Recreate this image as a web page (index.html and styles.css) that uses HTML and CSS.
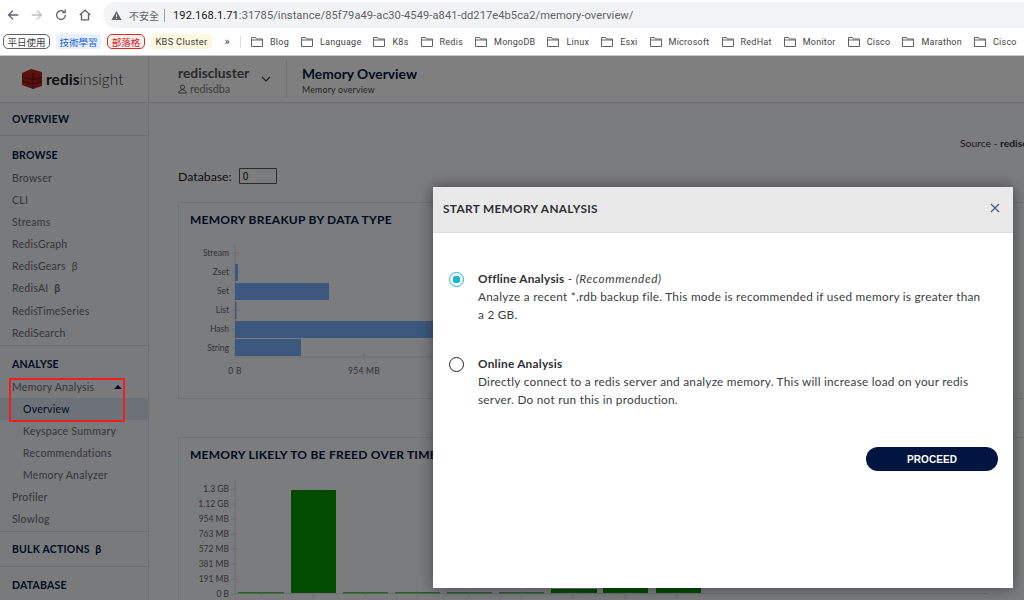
FILE: index.html
```html
<!DOCTYPE html>
<html lang="zh-TW">
<head>
<meta charset="utf-8">
<title>RedisInsight - Memory Overview</title>
<link rel="stylesheet" href="styles.css">
</head>
<body>
<div class="browser">
  <div class="toolbar">
    <div class="nav">
      <svg class="nav-icon" viewBox="0 0 16 16"><path d="M14 8H3M8 3L3 8l5 5" fill="none" stroke="#5f6368" stroke-width="1.6"/></svg>
      <svg class="nav-icon" viewBox="0 0 16 16"><path d="M2 8h11M8 3l5 5-5 5" fill="none" stroke="#bdc1c6" stroke-width="1.6"/></svg>
      <svg class="nav-icon" viewBox="0 0 16 16"><path d="M13 8a5 5 0 1 1-1.5-3.5M12.8 1.8v3.4H9.4" fill="none" stroke="#5f6368" stroke-width="1.5"/></svg>
      <svg class="nav-icon" viewBox="0 0 16 16"><path d="M2 8l6-5.5L14 8M4 7v6.5h8V7" fill="none" stroke="#5f6368" stroke-width="1.5"/></svg>
    </div>
    <div class="address">
      <svg class="warn" viewBox="0 0 12 12"><path d="M6 1l5.5 10H.5z" fill="#5f6368"/><path d="M5.500 4.500h1v3.500h-1zM5.500 8.800h1v1h-1z" fill="#f1f3f4"/></svg>
      <span class="insecure">不安全</span>
      <span class="pipe"></span>
      <span class="url"><b class="host">192.168.1.71</b>:31785/instance/85f79a49-ac30-4549-a841-dd217e4b5ca2/memory-overview/</span>
    </div>
  </div>
  <div class="bookmarks">
    <span class="chip chip-plain">平日使用</span>
    <span class="chip chip-blue">技術學習</span>
    <span class="chip chip-red">部落格</span>
    <span class="chip chip-yellow">KBS Cluster</span>
    <span class="more">»</span>
    <span class="sep"></span>
    <span class="bm"><svg class="folder" viewBox="0 0 12 10"><path d="M.5 9.500V.5h4l1 1.500h6v7.500zM.5 3h11" fill="none" stroke="#5f6368"/></svg>Blog</span>
    <span class="bm"><svg class="folder" viewBox="0 0 12 10"><path d="M.5 9.500V.5h4l1 1.500h6v7.500zM.5 3h11" fill="none" stroke="#5f6368"/></svg>Language</span>
    <span class="bm"><svg class="folder" viewBox="0 0 12 10"><path d="M.5 9.500V.5h4l1 1.500h6v7.500zM.5 3h11" fill="none" stroke="#5f6368"/></svg>K8s</span>
    <span class="bm"><svg class="folder" viewBox="0 0 12 10"><path d="M.5 9.500V.5h4l1 1.500h6v7.500zM.5 3h11" fill="none" stroke="#5f6368"/></svg>Redis</span>
    <span class="bm"><svg class="folder" viewBox="0 0 12 10"><path d="M.5 9.500V.5h4l1 1.500h6v7.500zM.5 3h11" fill="none" stroke="#5f6368"/></svg>MongoDB</span>
    <span class="bm"><svg class="folder" viewBox="0 0 12 10"><path d="M.5 9.500V.5h4l1 1.500h6v7.500zM.5 3h11" fill="none" stroke="#5f6368"/></svg>Linux</span>
    <span class="bm"><svg class="folder" viewBox="0 0 12 10"><path d="M.5 9.500V.5h4l1 1.500h6v7.500zM.5 3h11" fill="none" stroke="#5f6368"/></svg>Esxi</span>
    <span class="bm"><svg class="folder" viewBox="0 0 12 10"><path d="M.5 9.500V.5h4l1 1.500h6v7.500zM.5 3h11" fill="none" stroke="#5f6368"/></svg>Microsoft</span>
    <span class="bm"><svg class="folder" viewBox="0 0 12 10"><path d="M.5 9.500V.5h4l1 1.500h6v7.500zM.5 3h11" fill="none" stroke="#5f6368"/></svg>RedHat</span>
    <span class="bm"><svg class="folder" viewBox="0 0 12 10"><path d="M.5 9.500V.5h4l1 1.500h6v7.500zM.5 3h11" fill="none" stroke="#5f6368"/></svg>Monitor</span>
    <span class="bm"><svg class="folder" viewBox="0 0 12 10"><path d="M.5 9.500V.5h4l1 1.500h6v7.500zM.5 3h11" fill="none" stroke="#5f6368"/></svg>Cisco</span>
    <span class="bm"><svg class="folder" viewBox="0 0 12 10"><path d="M.5 9.500V.5h4l1 1.500h6v7.500zM.5 3h11" fill="none" stroke="#5f6368"/></svg>Marathon</span>
    <span class="bm"><svg class="folder" viewBox="0 0 12 10"><path d="M.5 9.500V.5h4l1 1.500h6v7.500zM.5 3h11" fill="none" stroke="#5f6368"/></svg>Cisco</span>
  </div>
</div>

<div class="app">
  <header class="app-header">
    <div class="logo">
      <svg class="logo-mark" viewBox="0 0 20 20">
        <path d="M0 4l9-4 11 3v14l-9 3-11-4z" fill="#b3201f"/>
        <path d="M0 8l11 3 9-3M0 12l11 3 9-3M11 4v16" fill="none" stroke="#6e1413" stroke-width="1.200"/>
      </svg>
      <span class="logo-text"><b>redis</b>insight</span>
    </div>
    <div class="db-switch">
      <div class="db-info">
        <div class="db-name">rediscluster</div>
        <div class="db-user">
          <svg class="user-icon" viewBox="0 0 10 10"><circle cx="5" cy="3" r="2.300" fill="none" stroke="#555"/><path d="M.8 9.500c.4-2.600 2-3.500 4.200-3.500s3.800.9 4.200 3.500z" fill="none" stroke="#555"/></svg>
          redisdba
        </div>
      </div>
      <svg class="chevron" viewBox="0 0 10 6"><path d="M1 1l4 4 4-4" fill="none" stroke="#444" stroke-width="1.200"/></svg>
    </div>
    <div class="page-title">
      <div class="page-h">Memory Overview</div>
      <div class="page-sub">Memory overview</div>
    </div>
  </header>
  <div class="app-body">
    <nav class="sidebar">
      <section class="side-top"><div class="side-h">OVERVIEW</div></section>
      <section class="side-sec">
        <div class="side-h side-h-list">BROWSE</div>
        <div class="side-i">Browser</div>
        <div class="side-i">CLI</div>
        <div class="side-i">Streams</div>
        <div class="side-i">RedisGraph</div>
        <div class="side-i">RedisGears&nbsp; β</div>
        <div class="side-i">RedisAI&nbsp; <b>β</b></div>
        <div class="side-i">RedisTimeSeries</div>
        <div class="side-i">RediSearch</div>
      </section>
      <section class="side-sec side-analyse">
        <div class="side-h side-h-list">ANALYSE</div>
        <div class="side-i side-exp">Memory Analysis<span class="caret"></span></div>
        <div class="side-i side-sub side-active">Overview</div>
        <div class="side-i side-sub">Keyspace Summary</div>
        <div class="side-i side-sub">Recommendations</div>
        <div class="side-i side-sub">Memory Analyzer</div>
        <div class="side-i">Profiler</div>
        <div class="side-i">Slowlog</div>
      </section>
      <section class="side-single"><div class="side-h">BULK ACTIONS&nbsp; β</div></section>
      <section class="side-last"><div class="side-h">DATABASE</div></section>
    </nav>
    <main class="main">
      <div class="source">Source - <b>rediscluster</b></div>
      <div class="db-row">
        <span class="db-label">Database:</span>
        <input class="db-input" value="0" readonly>
      </div>
      <section class="card card-breakup">
        <h2 class="card-h">MEMORY BREAKUP BY DATA TYPE</h2>
        <svg class="chart-a" viewBox="0 0 800 135">
          <g class="grid"><path d="M47 0V116M176 109V116M300 109V116M47 113H800"/>
            <path d="M44 9H52M44 28H52M44 47H52M44 66H52M44 85H52M44 104H52"/></g>
          <g class="bar-blue">
            <rect x="47" y="20" width="3" height="17"/>
            <rect x="47" y="39" width="94" height="17"/>
            <rect x="47" y="58" width="1.500" height="17"/>
            <rect x="47" y="77" width="400" height="17"/>
            <rect x="47" y="95" width="66" height="17"/>
          </g>
          <g class="tick-l">
            <text x="41" y="12">Stream</text><text x="41" y="31">Zset</text><text x="41" y="50">Set</text>
            <text x="41" y="69">List</text><text x="41" y="88">Hash</text><text x="41" y="107">String</text>
          </g>
          <g class="tick-m"><text x="47" y="130">0 B</text><text x="176" y="130">954 MB</text></g>
        </svg>
      </section>
      <section class="card card-freed">
        <h2 class="card-h">MEMORY LIKELY TO BE FREED OVER TIME</h2>
        <svg class="chart-b" viewBox="0 0 800 135">
          <g class="grid"><path d="M47 0V120M43 10H49M43 25H49M43 40H49M43 55H49M43 70H49M43 85H49M43 100H49M43 115H49M47 114.500H800M73 112V120M125 112V120M177 112V120M229 112V120M281 112V120M333 112V120M385 112V120M437 112V120M489 112V120"/></g>
          <g class="tick-l">
            <text x="41" y="13">1.3 GB</text><text x="41" y="28">1.12 GB</text><text x="41" y="43">954 MB</text>
            <text x="41" y="58">763 MB</text><text x="41" y="73">572 MB</text><text x="41" y="88">381 MB</text>
            <text x="41" y="103">191 MB</text><text x="41" y="118">0 B</text>
          </g>
          <g class="bar-green">
            <rect class="bar-thin" x="50" y="113" width="46" height="1.500"/>
            <rect x="103" y="11" width="45" height="103"/>
            <rect class="bar-thin" x="155" y="113" width="45" height="1.500"/>
            <rect class="bar-thin" x="207" y="113" width="45" height="1.500"/>
            <rect class="bar-thin" x="259" y="113" width="45" height="1.500"/>
            <rect class="bar-thin" x="311" y="113" width="45" height="1.500"/>
            <rect x="363" y="110" width="46" height="4"/>
            <rect x="415" y="109" width="45" height="5"/>
            <rect x="468" y="109" width="45" height="5"/>
          </g>
        </svg>
      </section>
    </main>
  </div>
</div>

<div class="backdrop"></div>
<div class="annotation"></div>

<div class="modal" role="dialog">
  <div class="modal-head">
    <span class="modal-title">START MEMORY ANALYSIS</span>
    <svg class="modal-close" viewBox="0 0 10 10"><path d="M1 1l8 8M9 1l-8 8" fill="none" stroke="#44546f" stroke-width="1.100"/></svg>
  </div>
  <div class="modal-body">
    <div class="option">
      <span class="radio radio-on"></span>
      <div class="opt-text">
        <div><b>Offline Analysis</b> - <i>(Recommended)</i></div>
        <div>Analyze a recent *.rdb backup file. This mode is recommended if used memory is greater than a 2 GB.</div>
      </div>
    </div>
    <div class="option">
      <span class="radio"></span>
      <div class="opt-text">
        <div><b>Online Analysis</b></div>
        <div>Directly connect to a redis server and analyze memory. This will increase load on your redis server. Do not run this in production.</div>
      </div>
    </div>
    <div class="modal-actions"><button class="proceed">PROCEED</button></div>
  </div>
</div>
</body>
</html>
```

FILE: styles.css
```css
* { box-sizing: border-box; }
html, body { margin: 0; height: 100%; overflow: hidden; }
body { width: 1024px; height: 600px; position: relative; font-family: "Lato", "Noto Sans", sans-serif; background: #fff; }

.browser { height: 56px; background: #fff; border-bottom: 1px solid #c8c8c8; font-family: "Roboto", "Noto Sans CJK TC", sans-serif; }
.toolbar { height: 28px; display: flex; align-items: flex-start; padding-top: 2px; }
.nav { width: 103px; height: 26px; display: flex; align-items: center; gap: 10px; padding-left: 6px; }
.nav-icon { width: 14px; height: 14px; }
.address { flex: 1; height: 26px; background: #f1f3f4; border-radius: 13px 0 0 13px; display: flex; align-items: center; padding-left: 8px; font-size: 11.100px; color: #5f6368; }
.warn { width: 11px; height: 11px; margin-right: 7px; }
.insecure { font-family: "Noto Sans CJK TC", sans-serif; font-size: 10px; }
.pipe { width: 1px; height: 13px; background: #9aa0a6; margin: 0 8px 0 5px; }
.url { white-space: nowrap; letter-spacing: .08px; }
.host { font-weight: 400; color: #202124; }

.bookmarks { height: 27px; display: flex; align-items: center; padding-left: 3px; font-size: 9px; color: #444; white-space: nowrap; overflow: hidden; }
.bookmarks > * { flex: none; }
.chip { height: 15px; border-radius: 4px; display: flex; align-items: center; justify-content: center; font-family: "Noto Sans CJK TC", sans-serif; font-size: 9.500px; margin-right: 6px; }
.chip-plain { width: 47px; border: 1px solid #5f6368; border-radius: 5px; color: #3c4043; }
.chip-blue { width: 45px; background: #e8f0fe; color: #1a5fd0; }
.chip-red { width: 38px; border: 1px solid #d93025; background: #fdeeee; color: #c5221f; border-radius: 5px; }
.chip-yellow { width: 61px; background: #fef7e0; color: #3c4043; font-family: "Roboto", sans-serif; font-size: 9.300px; letter-spacing: .3px; margin-right: 10px; }
.more { width: 10px; font-size: 11px; text-align: center; margin-right: 8px; }
.sep { width: 1px; height: 12px; background: #ddd; margin-right: 10px; }
.bm { display: flex; align-items: center; gap: 7px; margin-right: 12px; letter-spacing: .25px; }
.folder { width: 12px; height: 10px; flex: none; }

.app { height: 544px; background: #f6f8fc; display: flex; flex-direction: column; }
.app-header { height: 47px; background: #fff; border-bottom: 1px solid #dcdfe4; display: flex; flex: none; }
.logo { width: 149px; border-right: 1px solid #e0e2e6; display: flex; align-items: center; gap: 4px; padding: 0 0 0 22px; }
.logo-mark { width: 20px; height: 20px; flex: none; }
.logo-text { font-size: 15.600px; color: #333; font-weight: 300; }
.logo-text b { font-weight: 700; color: #222; }
.db-switch { width: 138px; border-right: 1px solid #e0e2e6; margin: 4px 0; display: flex; align-items: center; justify-content: space-between; padding: 0 15px 0 29px; }
.db-info { padding-top: 1px; }
.db-name { font-size: 13.800px; line-height: 17px; font-weight: 700; color: #555; }
.db-user { font-size: 10.800px; line-height: 13px; color: #777; display: flex; align-items: center; gap: 3px; margin-top: 1px; }
.user-icon { width: 9px; height: 10px; }
.chevron { width: 10px; height: 6px; }
.page-title { padding: 9px 0 0 15px; }
.page-h { font-size: 13.800px; line-height: 17px; font-weight: 700; color: #001540; }
.page-sub { font-size: 8.800px; line-height: 11px; color: #444; margin-top: 2px; letter-spacing: .2px; }

.app-body { flex: 1; display: flex; min-height: 0; overflow: hidden; }
.sidebar { width: 149px; flex: none; background: #f1f4f8; border-right: 1px solid #dcdfe4; font-size: 10.500px; color: #6a6d74; overflow: hidden; }
.sidebar section { border-bottom: 1px solid #dcdfe4; padding-left: 12px; }
.side-h { font-size: 10.500px; font-weight: 700; color: #001540; letter-spacing: .2px; }
.side-top { height: 33px; display: flex; align-items: center; }
.side-sec { padding-bottom: 1px; padding-top: 11px; }
.sidebar .side-analyse { padding-top: 10px; }
.side-h-list { height: 16px; line-height: 16px; margin-bottom: 4px; }
.side-i { height: 22.100px; line-height: 22px; letter-spacing: .25px; margin-left: -12px; padding-left: 12px; }
.side-exp { display: flex; align-items: center; justify-content: space-between; padding-right: 26px; }
.caret { width: 0; height: 0; border: 4px solid transparent; border-bottom: 4px solid #001540; border-top: 0; }
.side-sub { padding-left: 23px; }
.side-active { background: #d8e4f0; color: #001540; }
.side-single { height: 35px; display: flex; align-items: center; }
.side-last { height: 36px; display: flex; align-items: center; border-bottom: 0 !important; }

.main { flex: 1; padding: 0 0 0 29px; position: relative; min-width: 0; overflow: hidden; }
.source { height: 18px; margin-top: 34px; font-size: 10.300px; color: #333; white-space: nowrap; padding-left: 782px; }
.db-row { height: 16px; margin-top: 13px; display: flex; align-items: center; gap: 7px; font-size: 12.300px; color: #222; }
.db-input { width: 38px; height: 16px; border: 1px solid #555; padding: 0 3px; font: 10px "Roboto", sans-serif; background: transparent; color: #222; border-radius: 1px; }
.card { background: #f6f8fc; border: 1px solid #e1e4e9; width: 900px; }
.card-breakup { height: 197px; margin-top: 18px; padding: 9px 0 0 11px; }
.card-freed { height: 170px; margin-top: 38px; padding: 9px 0 0 11px; }
.card-h { margin: 0; font-size: 12px; font-weight: 700; color: #001540; letter-spacing: .25px; height: 15px; line-height: 15px; white-space: nowrap; }
.chart-a { display: block; width: 800px; height: 135px; margin: 17px 0 0 -2px; }
.chart-b { display: block; width: 800px; height: 135px; margin: 17px 0 0 -2px; }
.grid path { stroke: #dcdfe4; fill: none; stroke-width: 1; }
.bar-blue rect { fill: #78b0ff; }
.bar-green rect { fill: #009800; }
.bar-green .bar-thin { fill: #5cb85c; }
.tick-l text { font: 8.500px "Lato", sans-serif; fill: #666; text-anchor: end; }
.tick-m text { font: 8.500px "Lato", sans-serif; fill: #666; text-anchor: middle; letter-spacing: .3px; }

.backdrop { position: absolute; left: 0; right: 0; top: 56px; bottom: 0; background: rgba(0, 0, 0, .5); }
.annotation { position: absolute; left: 9px; top: 378px; width: 116px; height: 44px; border: 2px solid #f31c22; }

.modal { position: absolute; left: 433px; top: 187px; width: 580px; height: 401px; background: #fff; box-shadow: 0 0 14px rgba(0, 0, 0, .45); display: flex; flex-direction: column; }
.modal-head { height: 46px; flex: none; background: #e9e9e9; border-bottom: 1px solid #ddd; display: flex; align-items: center; justify-content: space-between; padding: 0 13px 2px 10px; }
.modal-title { font-size: 11.800px; font-weight: 700; color: #2f3034; letter-spacing: .35px; }
.modal-close { width: 10px; height: 10px; margin-bottom: 1px; }
.modal-body { flex: 1; padding: 37px 32px 0 16px; display: flex; flex-direction: column; font-size: 11.800px; line-height: 18px; color: #3c3d42; letter-spacing: .25px; }
.option { display: flex; gap: 14px; margin-bottom: 31px; }
.option i { letter-spacing: .6px; }
.radio { width: 15px; height: 15px; border-radius: 50%; border: 1.500px solid #222; flex: none; margin-top: 2px; }
.radio-on { border-color: #14b8d4; background: radial-gradient(circle, #14b8d4 0 3.500px, #fff 4px); }
.opt-text b { font-weight: 700; color: #2f3034; }
.modal-actions { display: flex; justify-content: flex-end; margin: 0 -17px 0 0; padding-top: 7px; }
.proceed { width: 132px; height: 24px; border: 0; border-radius: 12px; background: #001540; color: #fff; font: 700 10px "Liberation Sans", sans-serif; letter-spacing: .1px; }
```
